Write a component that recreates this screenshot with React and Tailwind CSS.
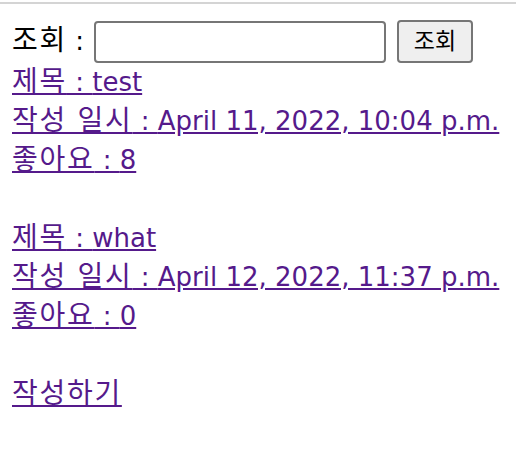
import React from 'react';

const posts = [
  { title: 'test', date: 'April 11, 2022, 10:04 p.m.', likes: 8 },
  { title: 'what', date: 'April 12, 2022, 11:37 p.m.', likes: 0 },
];

// Hangul runs a little larger and wider than the Latin text
const Ko = ({ children }) => (
  <span className="text-[28px] leading-none tracking-[1.7px]">{children}</span>
);

const App = () => {
  return (
    <div className="min-h-screen bg-white font-['DejaVu_Sans','Noto_Sans_CJK_KR',sans-serif]">
      <div className="h-[2px] mt-[2px] bg-[#d4d4d4]" />

      <div className="pl-3 pt-[16px]">
        <div className="flex items-center h-[43px] text-[26px] text-black">
          <span><Ko>조회</Ko> :</span>
          <input
            type="text"
            className="ml-[10px] w-[292px] h-[42px] border-2 border-[#767676] rounded-[4px] bg-white"
          />
          <button className="ml-[11px] w-[76px] h-[43px] border-2 border-[#767676] rounded-[4px] bg-[#efefef] text-[23px] leading-none">
            조회
          </button>
        </div>

        <div className="text-[26px] leading-[39px] text-[#551a8b]">
          {posts.map((p) => (
            <div key={p.title}>
              <a href="#" className="underline"><Ko>제목</Ko> : {p.title}</a>
              <br />
              <a href="#" className="underline"><Ko>작성 일시</Ko> : {p.date}</a>
              <br />
              <a href="#" className="underline"><Ko>좋아요</Ko> : {p.likes}</a>
              <br />
              <br />
            </div>
          ))}
          <a href="#" className="underline"><Ko>작성하기</Ko></a>
        </div>
      </div>
    </div>
  );
};

export default App;
